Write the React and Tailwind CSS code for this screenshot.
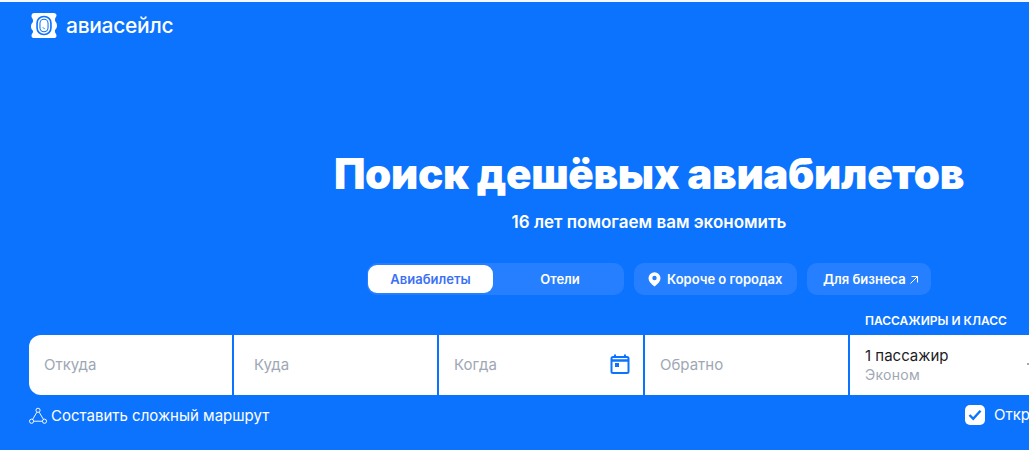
import React from "react";

const font = { fontFamily: "Inter, 'Noto Sans', sans-serif" };

function Logo() {
  return (
    <svg width="26" height="25" viewBox="0 0 27 27" preserveAspectRatio="none" className="shrink-0">
      <path
        fill="#fff"
        fillRule="evenodd"
        d="M3.500 0h20c1.900 0 3 1.100 3 2.500 0 1.900-1.600 2.500-1.600 4.500v.6c0 1.900 2.100 2.500 2.100 5.900s-2.100 4-2.100 5.900v.6c0 2 1.600 2.600 1.600 4.500 0 1.400-1.100 2.500-3 2.500h-20c-1.900 0-3-1.100-3-2.500 0-1.900 1.600-2.500 1.600-4.500v-.6C2.100 18.500 0 17.900 0 14.500s2.100-4 2.100-5.900V8C2.100 6 .5 5.400.5 3.500.5 1.100 1.600 0 3.500 0Z"
      />
      <rect x="6.300" y="3.800" width="14.400" height="19.400" rx="7" fill="none" stroke="#0c73fe" strokeWidth="1.700" />
      <rect x="9.300" y="6.800" width="8.400" height="13.400" rx="4.200" fill="none" stroke="#0c73fe" strokeWidth="1.100" />
      <path d="M12.300 15.500c.4.900 1 1.300 1.900 1.400" fill="none" stroke="#0c73fe" strokeWidth="1" />
    </svg>
  );
}

export default function App() {
  const label = "text-[15px] text-[#a0a7b4] pt-[1px]";
  return (
    <div className="w-[1029px] h-[450px] overflow-hidden bg-[#0c73fe] border-t-2 border-[#f4f7fb]" style={font}>
      <div className="w-[1298px] flex flex-col">
        <header className="h-[48px] pl-[31px] flex items-center gap-[9px] pb-[1px]">
          <Logo />
          <span className="text-white text-[21px] font-medium leading-none tracking-[-0.3px]">авиасейлс</span>
        </header>

        <main className="flex flex-col items-center pt-[100px]">
          <h1 className="text-white text-[42px] font-black leading-[48px] tracking-[-0.3px] whitespace-nowrap">
            Поиск дешёвых авиабилетов
          </h1>
          <p className="text-white text-[17px] font-semibold leading-[24px] mt-[12px]">16 лет помогаем вам экономить</p>

          <nav className="flex items-center gap-[10px] mt-[29px] text-white text-[13px] font-semibold">
            <div className="w-[257px] h-[32px] rounded-[10px] bg-[#267ffe] flex p-[2px] pl-[1px]">
              <button className="w-[125px] shrink-0 h-[28px] pt-[1px] rounded-[9px] bg-white text-[#3b70f6] font-semibold">Авиабилеты</button>
              <button className="w-[129px] shrink-0 pl-[5px] pt-[1px] h-[28px] font-semibold">Отели</button>
            </div>
            <button className="w-[163px] h-[32px] rounded-[10px] bg-[#267ffe] flex items-center gap-[6px] pl-[14px] pt-[1px] font-semibold">
              <svg width="13" height="15" viewBox="0 0 13 15">
                <path
                  fill="#fff"
                  fillRule="evenodd"
                  d="M6.500 14.500C3 11.800.5 9.200.5 6.200a6 6 0 0 1 12 0c0 3-2.500 5.600-6 8.300Zm0-6.300a2.200 2.200 0 1 0 0-4.400 2.200 2.200 0 0 0 0 4.400Z"
                />
              </svg>
              Короче о городах
            </button>
            <button className="w-[124px] h-[32px] rounded-[10px] bg-[#267ffe] flex items-center gap-[3px] pl-[16px] pt-[1px] font-semibold">
              Для бизнеса
              <svg width="10" height="10" viewBox="0 0 10 10" fill="none" stroke="#fff" strokeWidth="1">
                <path d="M1.500 8.500 8.500 1.500M2.500 1.500h6v6" />
              </svg>
            </button>
          </nav>

          <div className="w-full px-[29px] relative mt-[40px]">
            <span className="absolute left-[865px] top-[-22px] text-white text-[12px] font-semibold leading-[16px] whitespace-nowrap">
              ПАССАЖИРЫ И КЛАСС
            </span>
            <div className="flex h-[60px] gap-[2px]">
              <div className="w-[203px] h-full bg-white flex items-center rounded-l-xl pl-[15px] shrink-0">
                <span className={label}>Откуда</span>
              </div>
              <div className="w-[203px] h-full bg-white flex items-center pl-[20px] shrink-0">
                <span className={label}>Куда</span>
              </div>
              <div className="w-[204px] h-full bg-white flex items-center justify-between pl-[15px] shrink-0">
                <span className={label}>Когда</span>
                <svg width="20" height="20" viewBox="0 0 20 20" className="mr-[13px] mt-[-2px]" fill="none">
                  <rect x="1.500" y="3" width="17" height="16" rx="1.500" stroke="#0c73fe" strokeWidth="2" />
                  <path d="M1 6.500h18" stroke="#0c73fe" strokeWidth="2.500" />
                  <path d="M5 .500v3M15 .500v3" stroke="#0c73fe" strokeWidth="2" />
                  <rect x="5" y="9" width="4" height="4" fill="#0c73fe" />
                </svg>
              </div>
              <div className="w-[203px] h-full bg-white flex items-center pl-[15px] shrink-0">
                <span className={label}>Обратно</span>
              </div>
              <div className="w-[240px] h-full bg-white pl-[15px] pt-[11px] flex flex-col shrink-0 relative">
                <span className="text-[15px] leading-[19px] text-[#1c1c24]">1 пассажир</span>
                <span className="text-[14px] leading-[19px] text-[#a0a7b4] tracking-[0.3px]">Эконом</span>
                <span className="absolute left-[177px] top-[28px] w-[3px] h-[2px] bg-[#a0a7b4]" />
              </div>
            </div>

            <div className="flex items-center h-[22px] mt-[10px] relative">
              <svg width="19" height="18" viewBox="0 0 20 18" fill="none" stroke="#fff" strokeWidth="1" className="mt-[-1px]">
                <circle cx="9.500" cy="3" r="2.200" />
                <circle cx="2.700" cy="14.500" r="2.200" />
                <circle cx="16.300" cy="14.500" r="2.200" />
                <path d="M8.300 5 3.800 12.600M10.700 5l4.500 7.600M5 14.500h9" />
              </svg>
              <span className="text-white text-[15px] leading-[20px] ml-[3px]">Составить сложный маршрут</span>
              <div className="absolute left-[936px] top-[0px] flex items-center gap-[9px]">
                <span className="w-[20px] h-[20px] rounded-[5px] bg-white flex items-center justify-center">
                  <svg width="14" height="12" viewBox="0 0 14 12" fill="none" stroke="#0c73fe" strokeWidth="2.400">
                    <path d="M1.500 6 5.200 9.800 12.500 1.800" />
                  </svg>
                </span>
                <span className="text-white text-[15px] leading-[20px] whitespace-nowrap">Открыть Ostrovok.ru</span>
              </div>
            </div>
          </div>
        </main>
      </div>
    </div>
  );
}
